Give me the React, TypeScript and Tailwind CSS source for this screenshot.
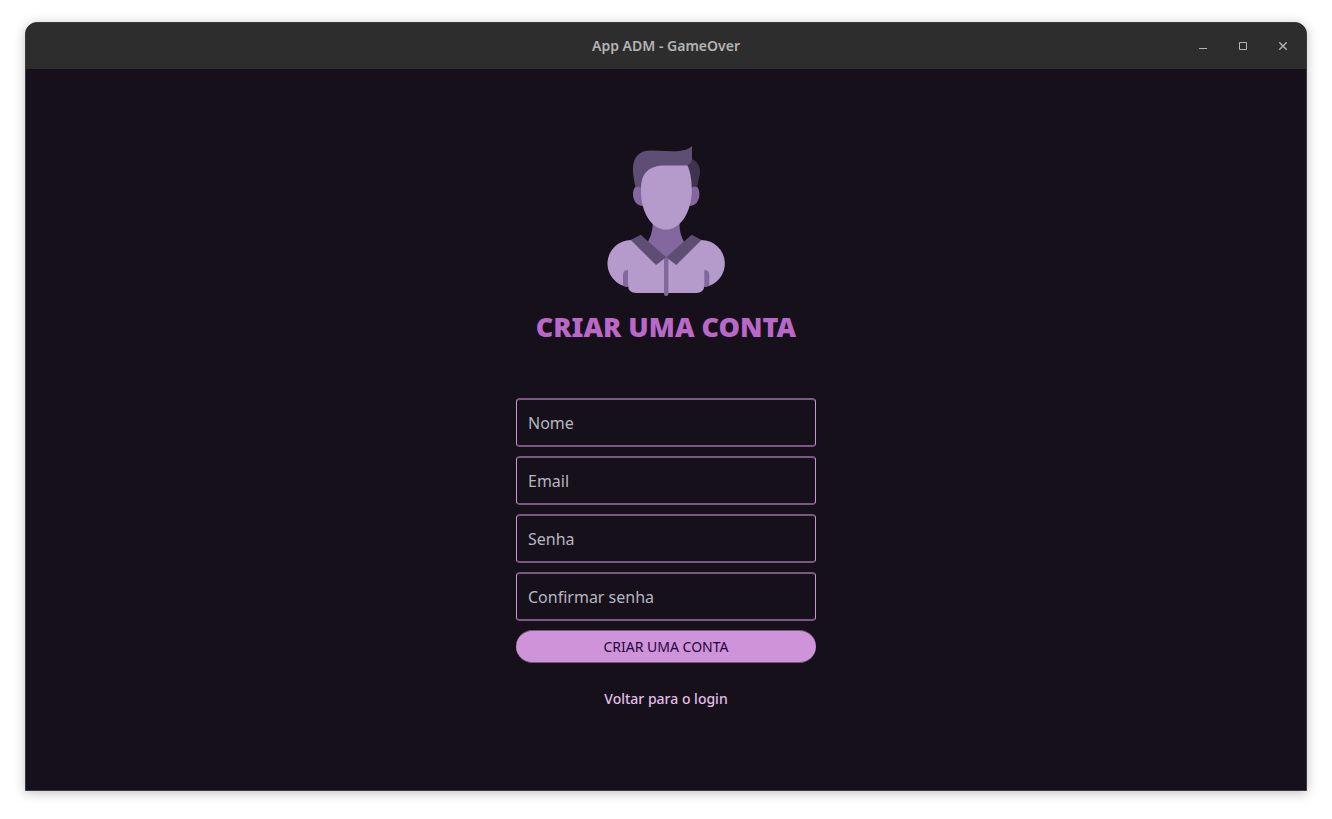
import React from "react";

const fields = [
  { id: "nome", label: "Nome", type: "text" },
  { id: "email", label: "Email", type: "email" },
  { id: "senha", label: "Senha", type: "password" },
  { id: "confirmar", label: "Confirmar senha", type: "password" },
];

function Avatar() {
  return (
    <svg className="h-[150px] w-[118px]" viewBox="0 0 118 150" aria-hidden="true">
      <path d="M45.7 76L45.5 82Q44.500 90 41 95.700L59 113L77 95.700Q73.500 90 72.700 82L72.500 76Z" fill="#82689c" />
      <path d="M24 94L31 93L59 111.300L87 93L94 94A23.600 23.600 0 0 1 97.300 141V139Q97.300 147 89 147H29.500Q21 147 21 139V141A23.600 23.600 0 0 1 24 94Z" fill="#b49bcb" />
      <path d="M21 124V141L16 140V129Q16 124 21 124Z" fill="#82689c" />
      <path d="M97.300 124V141L102.300 140V129Q102.300 124 97.300 124Z" fill="#82689c" />
      <path d="M57 110H61.400V147.800A2.200 2.200 0 0 1 57 147.800Z" fill="#82689c" />
      <path d="M23.700 94L33.700 88.700L59.200 111.300L49 119Z" fill="#5f4e74" />
      <path d="M94.500 94L84.700 88.700L59.200 111.300L69.300 119Z" fill="#5f4e74" />
      <path d="M35 41C29 38 26 42 26 48C26 55 30 60 36 60Z" fill="#82689c" />
      <path d="M83.500 41C89.500 38 92.400 42 92.400 48C92.400 55 88.500 60 82.500 60Z" fill="#82689c" />
      <path d="M85 13C91 16 93.500 20 93 28L90 41Q87 39.500 84.500 42L79 19Z" fill="#3f334d" />
      <path d="M34 36C34 22 43 16 59 16H78C83 21 84.800 34 84.800 44C84.800 65 74 83.600 59 83.600C44 83.600 34 65 34 46Z" fill="#b49bcb" />
      <path d="M28.500 41C26 30 26 25 26 23C26 10 33 4.500 44 4.500L66 5.200C75 5.200 81 4 85 0V12C85 17 82 19.700 77 19.600L58 19.400C42 19.400 34 27 34 42Q31 39 28.500 41Z" fill="#5f4e74" />
    </svg>
  );
}

export default function App() {
  return (
    <div className="flex min-h-screen bg-white px-[25px] pt-[22px] pb-7 font-['Noto_Sans',sans-serif]">
      <div className="flex grow flex-col overflow-hidden rounded-t-xl border border-[#3b3b3b] bg-[#16101b] shadow-[0_2px_12px_rgba(0,0,0,0.25)]">
        <header className="grid h-[46px] grid-cols-[1fr_auto_1fr] items-center bg-[#2d2d2d] text-[#b4b4b4]">
          <h1 className="col-start-2 text-sm font-semibold">App ADM - GameOver</h1>
          <div className="flex justify-end gap-4 pr-[11px]">
            <button type="button" aria-label="Minimizar" className="flex size-6 items-center justify-center">
              <svg className="size-2" viewBox="0 0 8 8" aria-hidden="true"><path d="M0 6.500H8" stroke="currentColor" /></svg>
            </button>
            <button type="button" aria-label="Maximizar" className="flex size-6 items-center justify-center">
              <svg className="size-2" viewBox="0 0 8 8" aria-hidden="true"><path d="M.5 .5H7.500V7.500H.5Z" fill="none" stroke="currentColor" /></svg>
            </button>
            <button type="button" aria-label="Fechar" className="flex size-6 items-center justify-center">
              <svg className="size-2" viewBox="0 0 8 8" aria-hidden="true"><path d="M.3 .3L7.700 7.700M7.700 .3L.3 7.700" stroke="currentColor" strokeWidth="1.400" /></svg>
            </button>
          </div>
        </header>
        <main className="flex grow flex-col items-center justify-center pb-1">
          <Avatar />
          <h2 className="mt-[11px] text-[27px] leading-10 font-black text-[#ba68c8]">CRIAR UMA CONTA</h2>
          <form className="mt-[51px] flex w-[300px] flex-col gap-[9px]" onSubmit={(e) => e.preventDefault()}>
            {fields.map((f) => (
              <input
                key={f.id}
                id={f.id}
                type={f.type}
                aria-label={f.label}
                placeholder={f.label}
                className="h-[49px] w-full rounded border-x border-y-2 border-x-[#ce93d8] border-y-[#7b5884] bg-transparent px-[11px] text-base text-[#e0e0e0] outline-none placeholder:text-[#b5b7c0]"
              />
            ))}
            <button type="submit" className="h-[33px] rounded-full border-y border-[#76547f] bg-[#ce93d8] text-sm text-[#24073f]">
              CRIAR UMA CONTA
            </button>
          </form>
          <a href="#login" className="mt-[26px] text-sm leading-5 font-medium text-[#e1bee7]">Voltar para o login</a>
        </main>
      </div>
    </div>
  );
}
